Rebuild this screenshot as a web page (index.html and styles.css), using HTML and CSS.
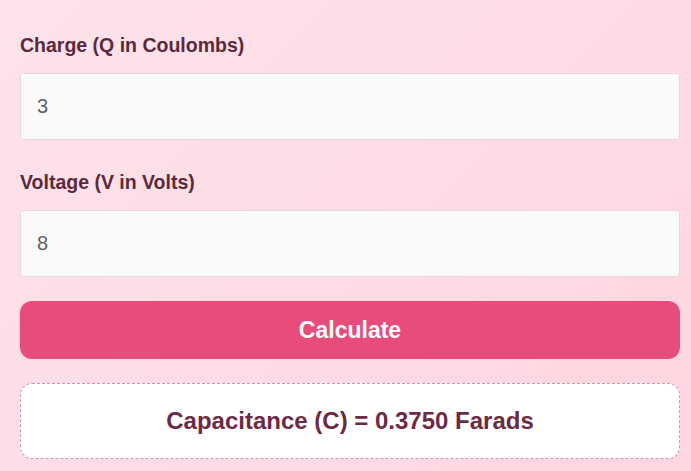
FILE: index.html
```html
<!DOCTYPE html>
<html lang="en">
<head>
  <meta charset="UTF-8" />
  <title>Capacitance Calculator</title>
  <meta name="viewport" content="width=device-width, initial-scale=1.0" />
  <link rel="stylesheet" href="styles.css">
</head>
<body>
  <div class="calc">
    <div class="field">
      <label for="charge">Charge (Q in Coulombs)</label>
      <input type="number" id="charge" value="3">
    </div>
    <div class="field">
      <label for="voltage">Voltage (V in Volts)</label>
      <input type="number" id="voltage" value="8">
    </div>
    <button class="btn" id="calcBtn">Calculate</button>
    <div class="result" id="result">Capacitance (C) = 0.3750 Farads</div>
  </div>
</body>
</html>
```

FILE: styles.css
```css
body {
  font-family: "Liberation Sans", Arial, sans-serif;
  margin: 0;
  padding: 0;
  min-height: 471px;
  background: linear-gradient(135deg, #fde3eb, #ffd5e0);
}
.calc {
  width: 660px;
  padding: 35px 0 0 20px;
}
.field {
  margin-bottom: 32px;
}
.field label {
  display: block;
  font-size: 19.5px;
  line-height: 20px;
  font-weight: bold;
  color: #5b2a3a;
  margin-bottom: 18px;
}
.field input {
  display: block;
  box-sizing: border-box;
  width: 100%;
  height: 67px;
  padding: 0 16px;
  font-family: inherit;
  font-size: 20px;
  color: #5f5f5f;
  background: #fafafa;
  border: 1px solid #ead6dc;
  border-radius: 3px;
  outline: none;
  -moz-appearance: textfield;
}
.field input::-webkit-inner-spin-button,
.field input::-webkit-outer-spin-button {
  -webkit-appearance: none;
  margin: 0;
}
.btn {
  display: block;
  width: 100%;
  height: 58px;
  margin-top: -8px;
  font-family: inherit;
  font-size: 23px;
  font-weight: bold;
  color: #fff;
  background: #e84c7a;
  border: none;
  border-radius: 12px;
  cursor: pointer;
}
.result {
  box-sizing: border-box;
  height: 76px;
  margin-top: 24px;
  display: flex;
  align-items: center;
  justify-content: center;
  font-size: 24px;
  font-weight: bold;
  color: #6e2a42;
  background: #fff;
  border: 1px dashed #d98fab;
  border-radius: 12px;
}
```
